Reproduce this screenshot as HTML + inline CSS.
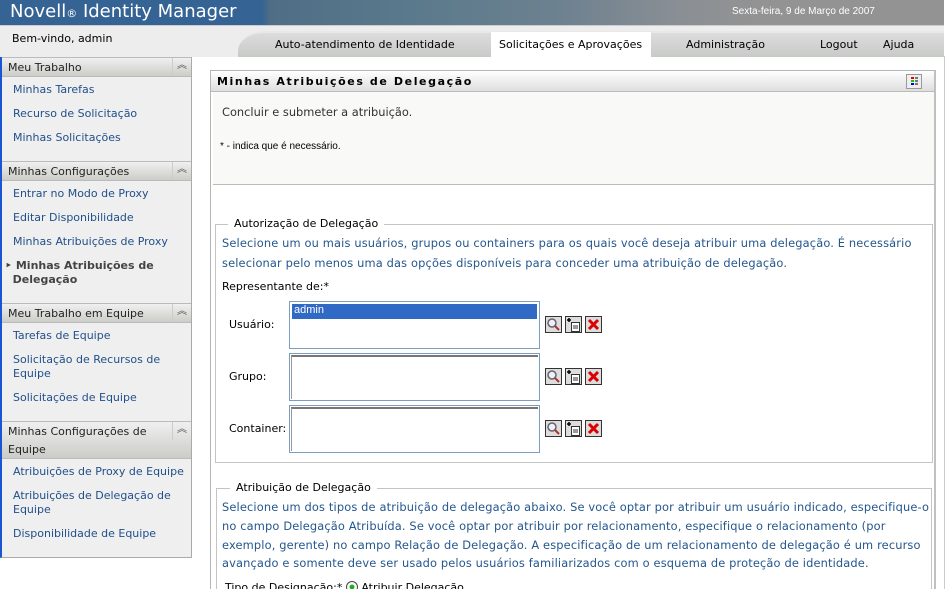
<!DOCTYPE html>
<html style="width:950px;height:589px;overflow:hidden"><head><meta charset="utf-8"><style>
*{margin:0;padding:0;box-sizing:border-box}
body{width:950px;height:589px;overflow:hidden;background:#fff;font-family:"DejaVu Sans","Liberation Sans",sans-serif;font-size:11px;color:#000;position:relative}
.a{position:absolute;white-space:nowrap}
#top{left:0;top:0;width:944px;height:25px;background:linear-gradient(90deg,#356394 0,#356394 262px,#4f6e86 270px,#5b7a8c 420px,#6d8190 560px,#8a8f94 680px,#939393 760px,#939393 100%)}
#logo{left:10px;top:1px;font-family:"DejaVu Sans",sans-serif;font-size:18px;color:#fff}
#logo small{font-size:11px}
#date{left:732px;top:6px;font-size:10px;color:#fff;font-family:"Liberation Sans",sans-serif}
#bar{left:0;top:25px;width:944px;height:32px;background:#ededed;border-top:1px solid #ccc}
#tabs{left:238px;top:31px;width:706px;height:26px;background:linear-gradient(#dcdcdc,#c8cac8);border-top-left-radius:26px 20px;border-top:2px solid #e8e8e8}
.tab{top:38px;font-size:11px}
#sel{left:491px;top:32px;width:160px;height:25px;background:#fff}
#side{left:0;top:57px;width:192px;height:501px;background:#efefef;border-right:1px solid #aaa;border-bottom:1px solid #aaa;border-left:2px solid #1a55d4}
.sh{left:2px;width:189px;height:20px;background:linear-gradient(#f0f0f0,#ccccc8);border-top:1px solid #bbb;border-bottom:1px solid #bbb;padding:3px 0 0 6px;font-size:11px;color:#222}
.sh i{position:absolute;right:0;top:0;width:19px;height:100%;border-left:1px solid #ccc;font-style:normal;text-align:center;font-size:10px;color:#555;line-height:16px}
.si{left:13px;color:#1f4f8a;font-size:11px}
#panel{left:210px;top:70px;width:726px;height:530px;border:1px solid #b5b5b5;border-right:2px solid #c0c0c0;background:#fff}
#ptitle{left:211px;top:71px;width:723px;height:21px;background:linear-gradient(#fff,#dedede);border-bottom:1px solid #bbb;font-weight:bold;font-size:11px;letter-spacing:1.6px;padding:4px 0 0 6px}
#pbody{left:213px;top:92px;width:721px;height:93px;background:#f9f9f8;border-bottom:1px solid #bbb}
fieldset{position:absolute;border:1px solid #c4c4c4}
.leg{background:#fff;padding:0 6px;font-size:11px}
.blue{color:#24578e;font-size:11.4px;line-height:19.5px;white-space:normal;letter-spacing:0.15px}
.lb{left:289px;width:251px;height:48px;border:1px solid #7d9ec0;background:#fff}
.lb div{position:absolute;left:1px;top:1px;right:1px;bottom:1px;border-top:2px solid #777;border-left:1px solid #999}
</style></head><body>
<div id="top" class="a"></div>
<div id="logo" class="a">Novell<small>®</small> Identity Manager</div>
<div id="date" class="a">Sexta-feira, 9 de Março de 2007</div>
<div id="bar" class="a"></div>
<div class="a" style="left:12px;top:32px;font-size:11px">Bem-vindo, admin</div>
<div id="tabs" class="a"></div>
<div id="sel" class="a"></div>
<div class="a tab" style="left:275px">Auto-atendimento de Identidade</div>
<div class="a tab" style="left:499px">Solicitações e Aprovações</div>
<div class="a tab" style="left:686px">Administração</div>
<div class="a tab" style="left:820px">Logout</div>
<div class="a tab" style="left:883px">Ajuda</div>
<div class="a" style="left:944px;top:56px;width:1px;height:533px;background:#ccc"></div>

<div id="side" class="a"></div>
<div class="a sh" style="top:57px">Meu Trabalho<i>︽</i></div>
<div class="a si" style="top:83px">Minhas Tarefas</div>
<div class="a si" style="top:107px">Recurso de Solicitação</div>
<div class="a si" style="top:131px">Minhas Solicitações</div>
<div class="a sh" style="top:161px">Minhas Configurações<i>︽</i></div>
<div class="a si" style="top:187px">Entrar no Modo de Proxy</div>
<div class="a si" style="top:211px">Editar Disponibilidade</div>
<div class="a si" style="top:235px">Minhas Atribuições de Proxy</div>
<div class="a" style="left:5px;top:259px;font-size:11px;font-weight:bold;color:#444;line-height:14px">‣ Minhas Atribuições de<br>&nbsp;&nbsp;Delegação</div>
<div class="a sh" style="top:303px">Meu Trabalho em Equipe<i>︽</i></div>
<div class="a si" style="top:329px">Tarefas de Equipe</div>
<div class="a si" style="top:353px;line-height:14px">Solicitação de Recursos de<br>Equipe</div>
<div class="a si" style="top:391px">Solicitações de Equipe</div>
<div class="a sh" style="top:421px;height:38px;line-height:18px;padding-top:1px">Minhas Configurações de<br>Equipe<i style="height:18px">︽</i></div>
<div class="a si" style="top:465px">Atribuições de Proxy de Equipe</div>
<div class="a si" style="top:489px;line-height:14px">Atribuições de Delegação de<br>Equipe</div>
<div class="a si" style="top:527px">Disponibilidade de Equipe</div>

<div id="panel" class="a"></div>
<div id="ptitle" class="a">Minhas Atribuições de Delegação</div>
<div class="a" style="left:906px;top:74px;width:16px;height:15px;border:1px solid #999;background:#eee">
<svg width="14" height="13" style="position:absolute;left:0;top:0"><rect x="4" y="2" width="3" height="2" fill="#e00"/><rect x="4" y="5" width="3" height="2" fill="#0c0"/><rect x="4" y="8" width="3" height="2" fill="#00d"/><rect x="8" y="2" width="3" height="2" fill="#777"/><rect x="8" y="5" width="3" height="2" fill="#777"/><rect x="8" y="8" width="3" height="2" fill="#777"/></svg></div>
<div id="pbody" class="a"></div>
<div class="a" style="left:222px;top:105px;font-size:11.4px;color:#333">Concluir e submeter a atribuição.</div>
<div class="a" style="left:220px;top:141px;font-size:10px;font-family:'Liberation Sans',sans-serif">* - indica que é necessário.</div>

<fieldset style="left:215px;top:224px;width:718px;height:239px"></fieldset>
<div class="a leg" style="left:228px;top:217px">Autorização de Delegação</div>
<div class="a blue" style="left:222px;top:234px;width:708px">Selecione um ou mais usuários, grupos ou containers para os quais você deseja atribuir uma delegação. É necessário selecionar pelo menos uma das opções disponíveis para conceder uma atribuição de delegação.</div>
<div class="a" style="left:222px;top:280px">Representante de:*</div>

<div class="a" style="left:229px;top:318px">Usuário:</div>
<div class="a lb" style="top:301px"><span class="a" style="left:2px;top:2px;width:245px;height:15px;background:#316ac5;color:#fff;font-family:'Liberation Sans',sans-serif;font-size:11px;padding-left:2px">admin</span></div>
<div class="a" style="left:229px;top:370px">Grupo:</div>
<div class="a lb" style="top:353px"><div></div></div>
<div class="a" style="left:229px;top:422px">Container:</div>
<div class="a lb" style="top:405px"><div></div></div>

<svg class="a" style="left:545px;top:316px" width="60" height="124">
<g id="ics">
<rect x="0.5" y="0.5" width="16" height="16" fill="#ddd" stroke="#333"/><circle cx="7" cy="7" r="4" fill="#eef" stroke="#666" stroke-width="1.5"/><line x1="10" y1="10" x2="14" y2="14" stroke="#a33" stroke-width="2"/>
<rect x="20.5" y="0.5" width="16" height="16" fill="#ddd" stroke="#333"/><rect x="26.5" y="6.5" width="8" height="9" fill="#fff" stroke="#333"/><line x1="28" y1="10" x2="33" y2="10" stroke="#333"/><line x1="28" y1="12" x2="33" y2="12" stroke="#333"/><path d="M22 4h4M24 2v4" stroke="#000" stroke-width="1.5"/>
<rect x="40.5" y="0.5" width="16" height="16" fill="#ddd" stroke="#333"/><path d="M44 4l9 9M53 4l-9 9" stroke="#d00" stroke-width="3"/>
</g>
<use href="#ics" y="52"/><use href="#ics" y="104"/>
</svg>

<fieldset style="left:216px;top:488px;width:716px;height:120px"></fieldset>
<div class="a leg" style="left:230px;top:481px">Atribuição de Delegação</div>
<div class="a blue" style="left:222px;top:498px;width:708px;line-height:18.8px">Selecione um dos tipos de atribuição de delegação abaixo. Se você optar por atribuir um usuário indicado, especifique-o no campo Delegação Atribuída. Se você optar por atribuir por relacionamento, especifique o relacionamento (por exemplo, gerente) no campo Relação de Delegação. A especificação de um relacionamento de delegação é um recurso avançado e somente deve ser usado pelos usuários familiarizados com o esquema de proteção de identidade.</div>
<div class="a" style="left:225px;top:581px">Tipo de Designação:* <span style="display:inline-block;width:12px;height:12px;border:1px solid #444;border-radius:50%;background:radial-gradient(#2a2 30%,#fff 40%);vertical-align:-2px"></span> Atribuir Delegação</div>
</body></html>
